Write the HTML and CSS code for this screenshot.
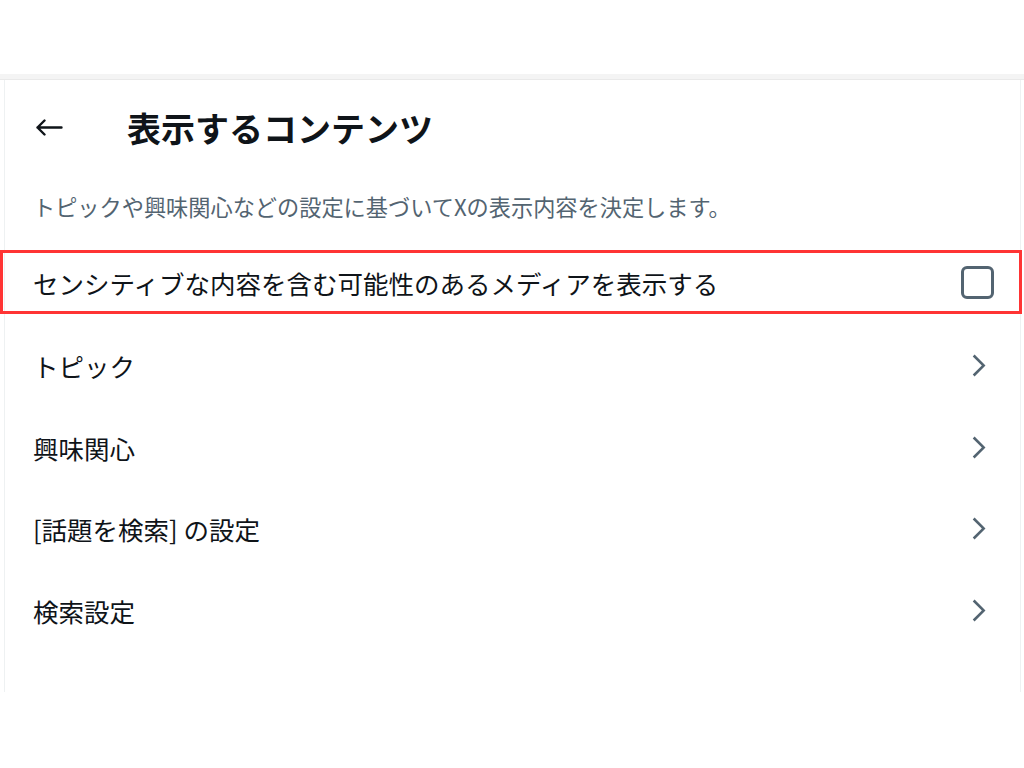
FILE: index.html
```html
<!DOCTYPE html>
<html lang="ja">
<head>
    <meta charset="UTF-8">
    <meta name="viewport" content="width=device-width, initial-scale=1.0">
    <title>表示するコンテンツ</title>
    <link rel="stylesheet" href="styles.css">
</head>
<body>
    <div class="top-space"></div>
    <div class="top-strip"></div>

    <div class="panel">
        <!-- ヘッダー -->
        <div class="header">
            <a href="#" class="back">
                <svg width="27" height="17" viewBox="0 0 27 17">
                    <path d="M1.5 8.5H25.5M8.5 1.5L1.5 8.5L8.5 15.5" fill="none" stroke="#0f1419" stroke-width="2.4" stroke-linecap="round" stroke-linejoin="round"/>
                </svg>
            </a>
            <h1 class="title">表示するコンテンツ</h1>
        </div>

        <p class="desc">トピックや興味関心などの設定に基づいてXの表示内容を決定します。</p>

        <!-- センシティブな内容 -->
        <label class="row highlight">
            <span class="label">センシティブな内容を含む可能性のあるメディアを表示する</span>
            <span class="checkbox"></span>
        </label>

        <div class="menu">
            <a href="#" class="row link">
                <span class="label">トピック</span>
                <svg class="chevron" viewBox="0 0 24 24"><path d="M14.586 12L7.543 4.96l1.414-1.42L17.414 12l-8.457 8.46-1.414-1.42L14.586 12z"/></svg>
            </a>
            <a href="#" class="row link">
                <span class="label">興味関心</span>
                <svg class="chevron" viewBox="0 0 24 24"><path d="M14.586 12L7.543 4.96l1.414-1.42L17.414 12l-8.457 8.46-1.414-1.42L14.586 12z"/></svg>
            </a>
            <a href="#" class="row link">
                <span class="label">[話題を検索] の設定</span>
                <svg class="chevron" viewBox="0 0 24 24"><path d="M14.586 12L7.543 4.96l1.414-1.42L17.414 12l-8.457 8.46-1.414-1.42L14.586 12z"/></svg>
            </a>
            <a href="#" class="row link">
                <span class="label">検索設定</span>
                <svg class="chevron" viewBox="0 0 24 24"><path d="M14.586 12L7.543 4.96l1.414-1.42L17.414 12l-8.457 8.46-1.414-1.42L14.586 12z"/></svg>
            </a>
        </div>
    </div>
</body>
</html>
```

FILE: styles.css
```css
:root {
    --text-color: #0f1419;
    --sub-color: #536471;
    --line-color: #eef1f2;
    --mark-color: #ff3434;
}

body {
    margin: 0;
    background: #ffffff;
    font-family: "Noto Sans CJK JP", "Noto Sans", sans-serif;
    color: var(--text-color);
}

.top-space {
    height: 74px;
}

.top-strip {
    height: 5px;
    background: #f4f4f4;
    border-bottom: 1px solid #e9e9e9;
}

.panel {
    margin: 0 3px 0 4px;
    height: 612px;
    border-left: 1px solid var(--line-color);
    border-right: 1px solid var(--line-color);
}

.header {
    height: 94px;
    display: flex;
    align-items: center;
    padding-left: 31px;
}

.back {
    display: flex;
    width: 91px;
}

.title {
    margin: 0;
    font-size: 34px;
    font-weight: 700;
}

.desc {
    margin: 0 0 18px;
    padding: 17px 0 0 28px;
    height: 58px;
    line-height: 30px;
    font-size: 22.2px;
    color: var(--sub-color);
    box-sizing: border-box;
}

.row {
    display: flex;
    align-items: center;
    justify-content: space-between;
    color: var(--text-color);
    text-decoration: none;
    font-size: 25.5px;
}

.highlight {
    height: 64px;
    margin: 0 -2px 0 -5px;
    padding: 0 25px 0 30px;
    border: 3px solid var(--mark-color);
    box-sizing: border-box;
    cursor: pointer;
}

.checkbox {
    width: 33px;
    height: 33px;
    border: 3px solid var(--sub-color);
    border-radius: 6px;
    box-sizing: border-box;
}

.menu {
    padding-top: 11px;
}

.link {
    height: 81.5px;
    padding: 0 26px 0 28px;
}

.chevron {
    width: 31px;
    height: 31px;
    fill: var(--sub-color);
}
```
